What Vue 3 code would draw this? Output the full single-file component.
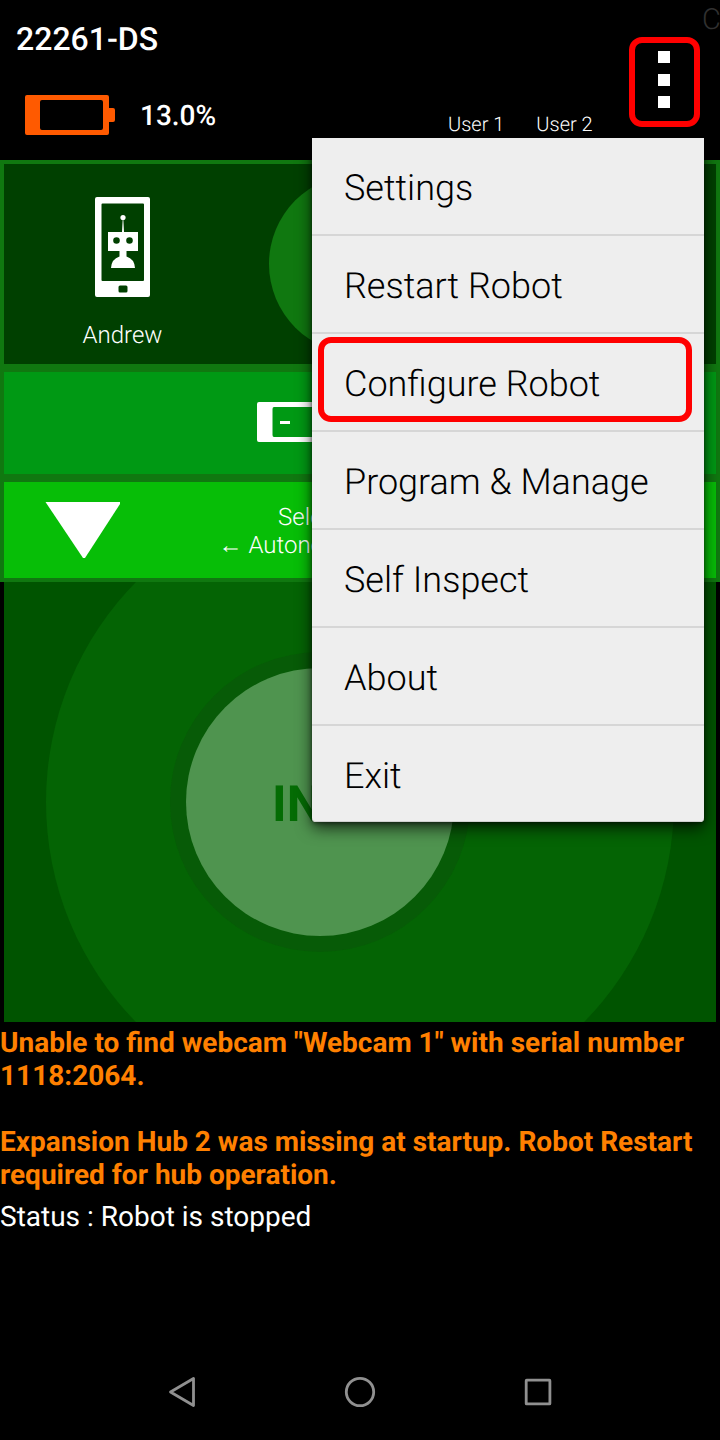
<script setup>
const menuItems = [
  'Settings',
  'Restart Robot',
  'Configure Robot',
  'Program & Manage',
  'Self Inspect',
  'About',
  'Exit',
]
</script>

<template>
  <div class="screen">
    <header class="top">
      <div class="device">
        <div class="name">22261-DS</div>
        <div class="battery">
          <svg width="92" height="40" viewBox="0 0 92 40">
            <path fill="#ff5a00" fill-rule="evenodd" d="M2 0H82Q84 0 84 2V13H88Q90 13 90 15V25Q90 27 88 27H84V38Q84 40 82 40H2Q0 40 0 38V2Q0 0 2 0ZM17 5Q15 5 15 7V33Q15 35 17 35H76Q78 35 78 33V7Q78 5 76 5Z" />
          </svg>
          <span class="percent">13.0%</span>
        </div>
      </div>
      <div class="users"><span>User 1</span><span>User 2</span></div>
      <div class="overflow"><i></i><i></i><i></i></div>
      <span class="cut">C</span>
    </header>

    <section class="panels">
      <div class="panel robot">
        <div class="phone">
          <svg width="55" height="100" viewBox="0 0 55 100">
            <path fill="#fff" fill-rule="evenodd" d="M2 0H53Q55 0 55 2V98Q55 100 53 100H2Q0 100 0 98V2Q0 0 2 0ZM7.500 6.500Q6.500 6.500 6.500 7.500V83Q6.500 84 7.500 84H48Q49 84 49 83V7.500Q49 6.500 48 6.500ZM25 88.500Q23.500 88.500 23.500 90V94Q23.500 95.500 25 95.500H31Q32.500 95.500 32.500 94V90Q32.500 88.500 31 88.500Z" />
            <circle cx="28" cy="20.500" r="2.600" fill="#fff" />
            <path fill="#fff" fill-rule="evenodd" d="M27.700 22H28.300L29 35H43V54H31.500V59.500Q39.500 62 40 71H16Q16.500 62 24.500 59.500V54H13V35H27ZM18.200 43.500A3.300 3.300 0 1 0 24.800 43.500A3.300 3.300 0 1 0 18.200 43.500ZM31.200 43.500A3.300 3.300 0 1 0 37.800 43.500A3.300 3.300 0 1 0 31.200 43.500Z" />
          </svg>
          <span>Andrew</span>
        </div>
        <div class="disc"></div>
      </div>
      <div class="panel voltage">
        <svg width="92" height="40" viewBox="0 0 92 40">
          <path fill="#fff" fill-rule="evenodd" d="M2 0H82Q84 0 84 2V13H90V27H84V38Q84 40 82 40H2Q0 40 0 38V2Q0 0 2 0ZM17 5Q15.500 5 15.500 7V33Q15.500 35 17 35H78V5Z" />
          <path fill="#fff" d="M23 19H33V22H23Z" />
        </svg>
      </div>
      <div class="panel opmode">
        <svg class="arrow" width="76" height="56" viewBox="0 0 76 56">
          <path fill="#fff" d="M.5 0H75V2L40 56H38Z" />
        </svg>
        <div class="choose">Select Op Mode<br />← Autonomous | TeleOp →</div>
      </div>
    </section>

    <section class="stage">
      <svg width="712" height="440" viewBox="4 582 712 440">
        <circle cx="360" cy="802" r="314" fill="#046404" />
        <circle cx="320" cy="802" r="150" fill="#075b07" />
        <circle cx="320" cy="802" r="134" fill="#4f944f" />
        <text x="319.500" y="821" text-anchor="middle">INIT</text>
      </svg>
    </section>

    <section class="messages">
      <p class="warn">Unable to find webcam "Webcam 1" with serial number 1118:2064.</p>
      <p class="warn">Expansion Hub 2 was missing at startup. Robot Restart required for hub operation.</p>
      <p class="status">Status : Robot is stopped</p>
    </section>

    <nav class="nav">
      <svg width="32" height="32" viewBox="0 0 32 32"><path d="M27.500 2.500V29.500L4.500 16Z" /></svg>
      <svg width="32" height="32" viewBox="0 0 32 32"><circle cx="16" cy="16" r="13.700" /></svg>
      <svg width="32" height="32" viewBox="0 0 32 32"><rect x="4.200" y="4.200" width="23.700" height="23.700" rx=".5" /></svg>
    </nav>

    <ul class="menu">
      <li v-for="item in menuItems" :key="item" :class="{ marked: item === 'Configure Robot' }">{{ item }}</li>
    </ul>
  </div>
</template>

<style>
body {
  background: #000;
}
</style>

<style scoped>
.screen {
  position: relative;
  display: flex;
  flex-direction: column;
  width: 720px;
  height: 1440px;
  overflow: hidden;
  background: #000;
  color: #fff;
  font-family: Roboto, "Liberation Sans", sans-serif;
  text-rendering: geometricPrecision;
}
svg {
  display: block;
  flex: none;
}
.top {
  display: flex;
  height: 160px;
  position: relative;
}
.device {
  width: 448px;
}
.name {
  margin: 20px 0 0 16px;
  font-size: 32px;
  line-height: 38px;
  font-weight: 500;
}
.battery {
  display: flex;
  align-items: center;
  margin: 37px 0 0 25px;
}
.percent {
  margin-left: 23px;
  font-size: 28px;
  font-weight: 500;
}
.users {
  display: flex;
  gap: 32px;
  width: 181px;
  padding-top: 112px;
  font-size: 20px;
  line-height: 24px;
  font-weight: 300;
  white-space: nowrap;
}
.overflow {
  box-sizing: border-box;
  display: flex;
  flex-direction: column;
  align-items: flex-start;
  gap: 10.5px;
  width: 71px;
  height: 90px;
  margin-top: 37px;
  padding: 8px 0 0 23px;
  border: 6px solid #f00;
  border-radius: 13px;
}
.overflow i {
  width: 12px;
  height: 12px;
  background: #fff;
}
.cut {
  position: absolute;
  left: 702px;
  top: 3px;
  font-size: 29px;
  line-height: 35px;
  font-weight: 300;
  color: #303030;
}
.panels {
  display: flex;
  flex-direction: column;
  gap: 8px;
  box-sizing: border-box;
  height: 422px;
  padding: 4px;
  background: #107810;
}
.panel {
  display: flex;
}
.robot {
  height: 200px;
  background: #004000;
}
.phone {
  display: flex;
  flex-direction: column;
  align-items: center;
  width: 237px;
  padding-top: 33px;
  margin-right: 28px;
  font-size: 24px;
  line-height: 28px;
  font-weight: 300;
}
.phone span {
  margin-top: 24px;
}
.disc {
  width: 180px;
  height: 180px;
  margin-top: 10px;
  border-radius: 50%;
  background: #107810;
}
.voltage {
  height: 102px;
  align-items: flex-start;
  padding: 30px 0 0 253px;
  box-sizing: border-box;
  background: #009914;
}
.opmode {
  height: 96px;
  background: #07be07;
}
.arrow {
  margin: 20px 0 0 41px;
}
.choose {
  width: 350px;
  margin-left: 65px;
  padding-top: 21px;
  text-align: center;
  font-size: 24px;
  line-height: 28px;
  font-weight: 300;
  white-space: nowrap;
}
.stage {
  height: 440px;
  margin: 0 4px;
  background: #005400;
}
.stage text {
  font-size: 50px;
  font-weight: 700;
  fill: #046c04;
}
.messages {
  padding-top: 4px;
  font-size: 28px;
  line-height: 33px;
}
.messages p {
  margin: 0;
}
.warn {
  font-weight: 700;
  color: #ff8000;
}
.messages .warn + .warn {
  margin-top: 33px;
}
.messages .status {
  margin-top: 9px;
}
.nav {
  display: flex;
  justify-content: space-between;
  margin: auto 166px 32px;
}
.nav svg {
  fill: none;
  stroke: #909090;
  stroke-width: 2.8;
  stroke-linejoin: round;
}
.menu {
  position: absolute;
  left: 312px;
  top: 138px;
  width: 392px;
  margin: 0;
  padding: 0;
  list-style: none;
  border-radius: 0 0 4px 4px;
  background: #eee;
  color: #000;
  box-shadow: inset 0 -1px #d0d0d0, 0 6px 16px rgba(0, 0, 0, 0.7), 0 1px 4px rgba(0, 0, 0, 0.5);
}
.menu li {
  position: relative;
  height: 96px;
  padding-left: 32px;
  font-size: 36px;
  line-height: 101px;
  font-weight: 300;
}
.menu li + li {
  border-top: 2px solid #d6d6d6;
}
.marked::after {
  content: "";
  position: absolute;
  left: 6px;
  top: 3px;
  box-sizing: border-box;
  width: 374px;
  height: 85px;
  border: 6px solid #f00;
  border-radius: 13px;
}
</style>
